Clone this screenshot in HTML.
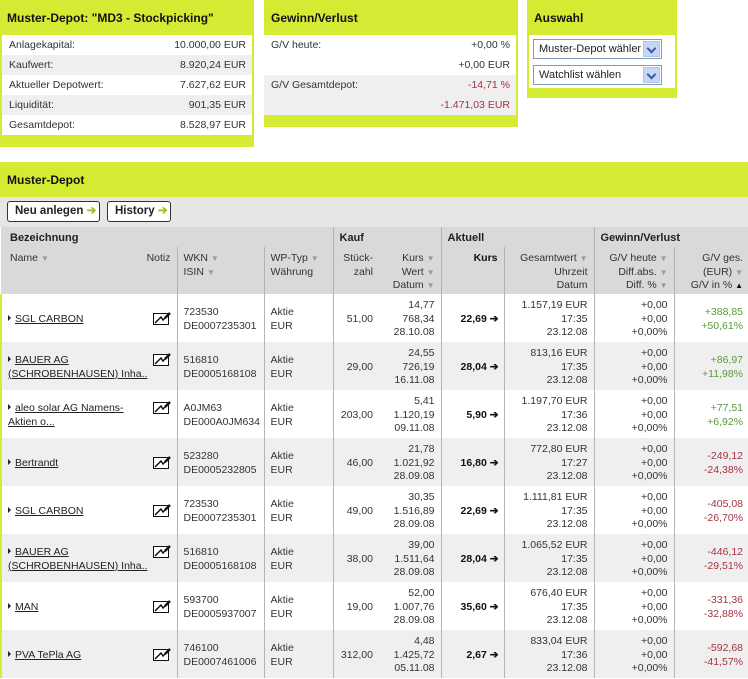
<!DOCTYPE html>
<html><head><meta charset="utf-8">
<style>
*{margin:0;padding:0;box-sizing:border-box}
body{width:748px;height:679px;overflow:hidden;background:#fff;font-family:"Liberation Sans",Arial,sans-serif;font-size:10.5px;color:#222;position:relative}
.g{background:#d5eb33}
.box{position:absolute}
.bh{height:35px;padding:11px 7px;font-weight:bold;font-size:12px;color:#111}
.r{height:20px;line-height:21px;padding:0 6px 0 7px;display:flex;justify-content:space-between;color:#333}
.alt{background:#efefef}
.red{color:#a33340}.grn{color:#5b9a3a}
.sel{position:absolute;left:6px;width:129px;height:20px;border:1px solid #7f9db9;background:#fff;line-height:18px;padding-left:5px;font-size:11px;color:#222}
.sel i{position:absolute;right:1px;top:1px;width:17px;height:16px;background:#c6d6f6;border:1px solid #b0c4ec}
.sel i:after{content:"";position:absolute;left:4px;top:3px;width:5px;height:5px;border-right:2px solid #3d5aa0;border-bottom:2px solid #3d5aa0;transform:rotate(45deg)}
.btn{position:absolute;top:201px;height:21px;border:1px solid #333;border-radius:3px;background:#fff;font-weight:bold;font-size:11.5px;line-height:19px;padding-left:7px;color:#222}
.btn b{color:#9bc31c}
table{position:absolute;left:0;top:227px;width:748px;border-collapse:collapse;table-layout:fixed}
td{vertical-align:middle;line-height:13.5px;color:#333;padding:0 6px}
thead td{background:#d9d9d9;vertical-align:top}
.h1 td{height:20px;font-weight:bold;color:#222;padding-top:5px;font-size:11px}
.h2 td{height:47px;padding-top:5px}
.bl{border-left:1px solid #b4b4b4}
.rt{text-align:right}
.s{color:#999;font-size:8px}
tbody tr{height:48px}
tbody td{padding-top:3px}
tbody tr:nth-child(even){background:#efefef}
.nm{border-left:2px solid #d5eb33;padding-left:6px}
.nm a{color:#222;text-decoration:underline}
.nm svg.ic{float:right;margin-top:-1px}
.tri{display:inline-block;width:0;height:0;border-left:3px solid #222;border-top:3px solid transparent;border-bottom:3px solid transparent;margin-right:4px;vertical-align:1px}
.k{font-weight:bold;color:#111;text-align:right;padding-right:5px}
</style></head><body>

<div class="box g" style="left:0;top:0;width:254px;height:147px">
<div class="bh">Muster-Depot: "MD3 - Stockpicking"</div>
<div style="background:#fff;margin:0 2px">
<div class="r"><span>Anlagekapital:</span><span>10.000,00 EUR</span></div>
<div class="r alt"><span>Kaufwert:</span><span>8.920,24 EUR</span></div>
<div class="r"><span>Aktueller Depotwert:</span><span>7.627,62 EUR</span></div>
<div class="r alt"><span>Liquidität:</span><span>901,35 EUR</span></div>
<div class="r"><span>Gesamtdepot:</span><span>8.528,97 EUR</span></div>
</div></div>

<div class="box g" style="left:264px;top:0;width:254px;height:127px">
<div class="bh">Gewinn/Verlust</div>
<div style="margin:0 2px 0 0">
<div class="r" style="background:#fff"><span>G/V heute:</span><span>+0,00 %</span></div>
<div class="r" style="background:#fff"><span></span><span>+0,00 EUR</span></div>
<div class="r alt"><span>G/V Gesamtdepot:</span><span class="red">-14,71 %</span></div>
<div class="r alt"><span></span><span class="red">-1.471,03 EUR</span></div>
</div></div>

<div class="box g" style="left:527px;top:0;width:150px;height:98px">
<div class="bh">Auswahl</div>
<div style="position:absolute;left:2px;top:35px;width:146px;height:53px;background:#fff"></div>
<div class="sel" style="top:39px">Muster-Depot wähler<i></i></div>
<div class="sel" style="top:65px">Watchlist wählen<i></i></div>
</div>

<div class="g" style="position:absolute;left:0;top:162px;width:748px;height:35px;padding:11px 7px;font-weight:bold;font-size:12px;color:#111">Muster-Depot</div>
<div style="position:absolute;left:0;top:197px;width:748px;height:30px;background:#e6e6e6"></div>
<div class="btn" style="left:7px;width:93px">Neu anlegen <b>➔</b></div>
<div class="btn" style="left:107px;width:64px">History <b>➔</b></div>

<table>
<colgroup><col style="width:176px"><col style="width:87px"><col style="width:69px"><col style="width:43px"><col style="width:65px"><col style="width:63px"><col style="width:90px"><col style="width:80px"><col style="width:75px"></colgroup>
<thead>
<tr class="h1"><td colspan="3" style="padding-left:9px">Bezeichnung</td><td colspan="2" class="bl">Kauf</td><td colspan="2" class="bl">Aktuell</td><td colspan="2" class="bl">Gewinn/Verlust</td></tr>
<tr class="h2"><td style="padding-left:9px">Name <span class="s">▼</span><span style="float:right">Notiz</span></td><td class="bl">WKN <span class="s">▼</span><br>ISIN <span class="s">▼</span></td><td class="bl">WP-Typ <span class="s">▼</span><br>Währung</td><td class="bl rt" style="padding-right:3px">Stück-<br>zahl</td><td class="rt">Kurs <span class="s">▼</span><br>Wert <span class="s">▼</span><br>Datum <span class="s">▼</span></td><td class="bl rt" style="font-weight:bold;color:#111">Kurs</td><td class="bl rt">Gesamtwert <span class="s">▼</span><br>Uhrzeit<br>Datum</td><td class="bl rt">G/V heute <span class="s">▼</span><br>Diff.abs. <span class="s">▼</span><br>Diff. % <span class="s">▼</span></td><td class="bl rt">G/V ges.<br>(EUR) <span class="s">▼</span><br>G/V in % <span style="font-size:8px;color:#111">▲</span></td></tr>
</thead>
<tbody>
<tr><td class="nm"><svg class="ic" width="18" height="14" viewBox="0 0 18 14"><rect x="0.5" y="1.5" width="15" height="11" fill="#fff" stroke="#111"/><path d="M2 11 L8 5 L10 8 L16 2" fill="none" stroke="#111" stroke-width="1.5"/><path d="M12 6 L17 1" stroke="#111" stroke-width="2.5"/></svg><span class="tri"></span><a>SGL CARBON</a></td><td class="bl">723530<br>DE0007235301</td><td class="bl">Aktie<br>EUR</td><td class="bl rt" style="padding-right:3px">51,00</td><td class="rt">14,77<br>768,34<br>28.10.08</td><td class="bl k">22,69 ➔</td><td class="bl rt">1.157,19 EUR<br>17:35<br>23.12.08</td><td class="bl rt">+0,00<br>+0,00<br>+0,00%</td><td class="bl rt grn">+388,85<br>+50,61%</td></tr>
<tr><td class="nm"><svg class="ic" width="18" height="14" viewBox="0 0 18 14"><rect x="0.5" y="1.5" width="15" height="11" fill="#fff" stroke="#111"/><path d="M2 11 L8 5 L10 8 L16 2" fill="none" stroke="#111" stroke-width="1.5"/><path d="M12 6 L17 1" stroke="#111" stroke-width="2.5"/></svg><span class="tri"></span><a>BAUER AG<br>(SCHROBENHAUSEN) Inha..</a></td><td class="bl">516810<br>DE0005168108</td><td class="bl">Aktie<br>EUR</td><td class="bl rt" style="padding-right:3px">29,00</td><td class="rt">24,55<br>726,19<br>16.11.08</td><td class="bl k">28,04 ➔</td><td class="bl rt">813,16 EUR<br>17:35<br>23.12.08</td><td class="bl rt">+0,00<br>+0,00<br>+0,00%</td><td class="bl rt grn">+86,97<br>+11,98%</td></tr>
<tr><td class="nm"><svg class="ic" width="18" height="14" viewBox="0 0 18 14"><rect x="0.5" y="1.5" width="15" height="11" fill="#fff" stroke="#111"/><path d="M2 11 L8 5 L10 8 L16 2" fill="none" stroke="#111" stroke-width="1.5"/><path d="M12 6 L17 1" stroke="#111" stroke-width="2.5"/></svg><span class="tri"></span><a>aleo solar AG Namens-<br>Aktien o...</a></td><td class="bl">A0JM63<br>DE000A0JM634</td><td class="bl">Aktie<br>EUR</td><td class="bl rt" style="padding-right:3px">203,00</td><td class="rt">5,41<br>1.120,19<br>09.11.08</td><td class="bl k">5,90 ➔</td><td class="bl rt">1.197,70 EUR<br>17:36<br>23.12.08</td><td class="bl rt">+0,00<br>+0,00<br>+0,00%</td><td class="bl rt grn">+77,51<br>+6,92%</td></tr>
<tr><td class="nm"><svg class="ic" width="18" height="14" viewBox="0 0 18 14"><rect x="0.5" y="1.5" width="15" height="11" fill="#fff" stroke="#111"/><path d="M2 11 L8 5 L10 8 L16 2" fill="none" stroke="#111" stroke-width="1.5"/><path d="M12 6 L17 1" stroke="#111" stroke-width="2.5"/></svg><span class="tri"></span><a>Bertrandt</a></td><td class="bl">523280<br>DE0005232805</td><td class="bl">Aktie<br>EUR</td><td class="bl rt" style="padding-right:3px">46,00</td><td class="rt">21,78<br>1.021,92<br>28.09.08</td><td class="bl k">16,80 ➔</td><td class="bl rt">772,80 EUR<br>17:27<br>23.12.08</td><td class="bl rt">+0,00<br>+0,00<br>+0,00%</td><td class="bl rt red">-249,12<br>-24,38%</td></tr>
<tr><td class="nm"><svg class="ic" width="18" height="14" viewBox="0 0 18 14"><rect x="0.5" y="1.5" width="15" height="11" fill="#fff" stroke="#111"/><path d="M2 11 L8 5 L10 8 L16 2" fill="none" stroke="#111" stroke-width="1.5"/><path d="M12 6 L17 1" stroke="#111" stroke-width="2.5"/></svg><span class="tri"></span><a>SGL CARBON</a></td><td class="bl">723530<br>DE0007235301</td><td class="bl">Aktie<br>EUR</td><td class="bl rt" style="padding-right:3px">49,00</td><td class="rt">30,35<br>1.516,89<br>28.09.08</td><td class="bl k">22,69 ➔</td><td class="bl rt">1.111,81 EUR<br>17:35<br>23.12.08</td><td class="bl rt">+0,00<br>+0,00<br>+0,00%</td><td class="bl rt red">-405,08<br>-26,70%</td></tr>
<tr><td class="nm"><svg class="ic" width="18" height="14" viewBox="0 0 18 14"><rect x="0.5" y="1.5" width="15" height="11" fill="#fff" stroke="#111"/><path d="M2 11 L8 5 L10 8 L16 2" fill="none" stroke="#111" stroke-width="1.5"/><path d="M12 6 L17 1" stroke="#111" stroke-width="2.5"/></svg><span class="tri"></span><a>BAUER AG<br>(SCHROBENHAUSEN) Inha..</a></td><td class="bl">516810<br>DE0005168108</td><td class="bl">Aktie<br>EUR</td><td class="bl rt" style="padding-right:3px">38,00</td><td class="rt">39,00<br>1.511,64<br>28.09.08</td><td class="bl k">28,04 ➔</td><td class="bl rt">1.065,52 EUR<br>17:35<br>23.12.08</td><td class="bl rt">+0,00<br>+0,00<br>+0,00%</td><td class="bl rt red">-446,12<br>-29,51%</td></tr>
<tr><td class="nm"><svg class="ic" width="18" height="14" viewBox="0 0 18 14"><rect x="0.5" y="1.5" width="15" height="11" fill="#fff" stroke="#111"/><path d="M2 11 L8 5 L10 8 L16 2" fill="none" stroke="#111" stroke-width="1.5"/><path d="M12 6 L17 1" stroke="#111" stroke-width="2.5"/></svg><span class="tri"></span><a>MAN</a></td><td class="bl">593700<br>DE0005937007</td><td class="bl">Aktie<br>EUR</td><td class="bl rt" style="padding-right:3px">19,00</td><td class="rt">52,00<br>1.007,76<br>28.09.08</td><td class="bl k">35,60 ➔</td><td class="bl rt">676,40 EUR<br>17:35<br>23.12.08</td><td class="bl rt">+0,00<br>+0,00<br>+0,00%</td><td class="bl rt red">-331,36<br>-32,88%</td></tr>
<tr><td class="nm"><svg class="ic" width="18" height="14" viewBox="0 0 18 14"><rect x="0.5" y="1.5" width="15" height="11" fill="#fff" stroke="#111"/><path d="M2 11 L8 5 L10 8 L16 2" fill="none" stroke="#111" stroke-width="1.5"/><path d="M12 6 L17 1" stroke="#111" stroke-width="2.5"/></svg><span class="tri"></span><a>PVA TePla AG</a></td><td class="bl">746100<br>DE0007461006</td><td class="bl">Aktie<br>EUR</td><td class="bl rt" style="padding-right:3px">312,00</td><td class="rt">4,48<br>1.425,72<br>05.11.08</td><td class="bl k">2,67 ➔</td><td class="bl rt">833,04 EUR<br>17:36<br>23.12.08</td><td class="bl rt">+0,00<br>+0,00<br>+0,00%</td><td class="bl rt red">-592,68<br>-41,57%</td></tr>
</tbody></table>
</body></html>
